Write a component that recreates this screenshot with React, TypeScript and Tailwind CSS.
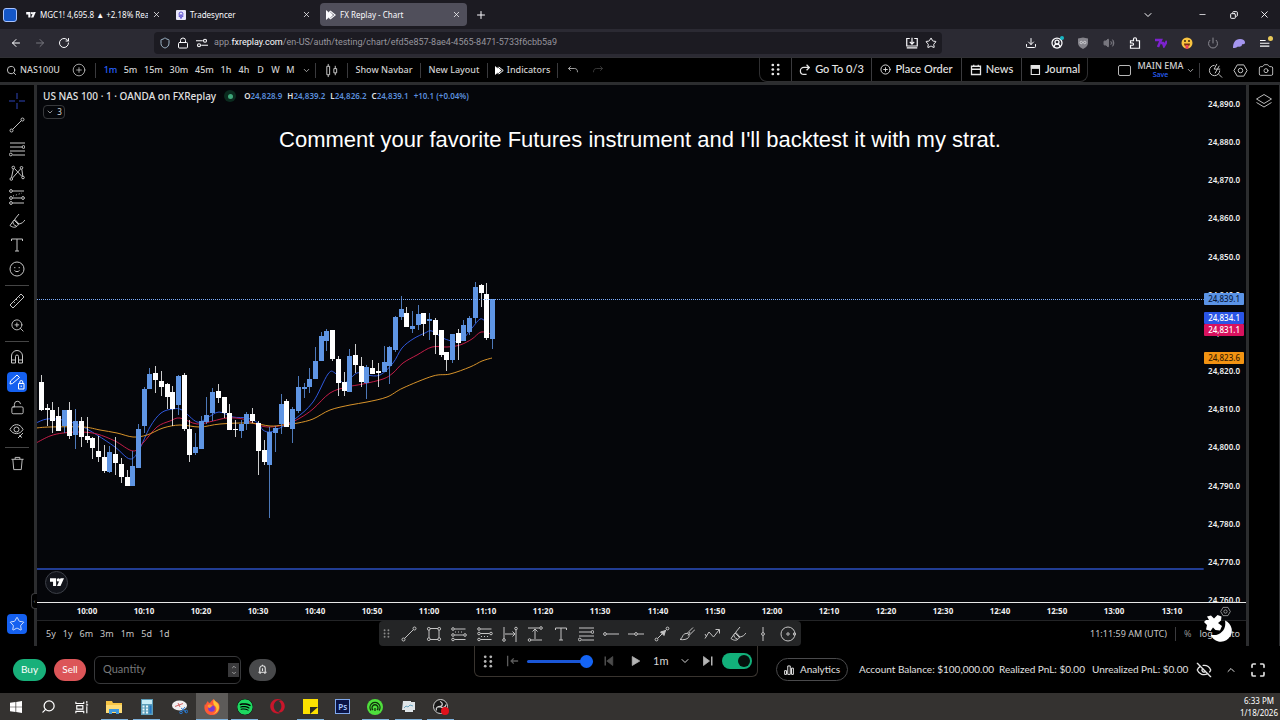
import React from 'react'
import {
  ArrowLeft,
  ArrowRight,
  Camera,
  ChevronDown,
  ChevronUp,
  CirclePlus,
  CircleUserRound,
  Copy,
  Download,
  EyeOff,
  Lock,
  LockOpen,
  Maximize,
  Minus,
  Plus,
  Power,
  RotateCw,
  Search,
  Shield,
  Star,
  Volume2,
  X,
  ZoomIn,
} from 'lucide-react'
import { FaOpera, FaSpotify } from 'react-icons/fa'

const UI_FONT = "font-['Noto_Sans','Open_Sans',sans-serif]"
const APP_FONT = "font-['Lato','Noto_Sans',sans-serif]"

// high, body top, body bottom, low; 'u' closes up (blue), 'd' closes down (white)
type Candle = ['u' | 'd', number, number, number, number]

const candles: Candle[] = [
  ['d', 290, 297, 325, 326], ['d', 319, 323, 325, 341], ['d', 317, 325, 336, 348], ['d', 322, 331, 346, 346],
  ['u', 325, 325, 341, 348], ['d', 317, 325, 351, 354], ['u', 324, 336, 350, 364], ['d', 332, 336, 352, 362],
  ['d', 332, 351, 355, 358], ['d', 352, 353, 363, 374], ['d', 351, 366, 372, 377], ['d', 360, 372, 386, 388],
  ['u', 361, 367, 387, 388], ['d', 352, 369, 378, 390], ['d', 373, 379, 392, 398], ['d', 385, 392, 401, 401],
  ['u', 366, 381, 401, 401], ['u', 339, 344, 383, 383], ['u', 302, 304, 341, 348], ['u', 283, 289, 304, 304],
  ['d', 281, 288, 295, 308], ['d', 286, 296, 302, 311], ['d', 298, 299, 312, 324], ['d', 301, 307, 324, 341],
  ['u', 290, 291, 320, 330], ['d', 288, 290, 344, 346], ['d', 335, 344, 370, 377], ['u', 348, 362, 368, 370],
  ['u', 331, 336, 364, 364], ['u', 312, 330, 337, 339], ['u', 303, 307, 328, 336], ['d', 299, 306, 313, 318],
  ['d', 312, 312, 328, 333], ['d', 319, 328, 345, 345], ['d', 335, 344, 345, 352], ['u', 335, 339, 346, 353],
  ['u', 327, 329, 339, 345], ['d', 323, 329, 336, 338], ['d', 336, 338, 366, 390], ['d', 355, 365, 377, 380],
  ['u', 342, 347, 380, 433], ['u', 341, 343, 348, 367], ['u', 309, 319, 339, 349], ['d', 314, 316, 342, 342],
  ['u', 322, 324, 344, 358], ['u', 291, 302, 326, 328], ['u', 298, 302, 304, 313], ['u', 283, 294, 302, 308],
  ['u', 262, 276, 294, 294], ['u', 247, 251, 276, 276], ['u', 244, 246, 256, 266], ['d', 245, 245, 274, 276],
  ['d', 271, 274, 298, 311], ['d', 287, 297, 306, 311], ['u', 264, 271, 307, 307], ['d', 259, 270, 280, 288],
  ['d', 272, 281, 297, 302], ['u', 280, 282, 298, 314], ['d', 275, 283, 289, 289], ['d', 278, 286, 288, 302],
  ['u', 261, 277, 287, 287], ['u', 261, 262, 281, 299], ['u', 231, 232, 265, 267], ['u', 211, 224, 232, 235],
  ['d', 222, 228, 242, 242], ['u', 226, 241, 244, 248], ['u', 220, 229, 240, 245], ['d', 228, 228, 239, 251],
  ['u', 228, 234, 236, 255], ['d', 233, 235, 250, 269], ['d', 245, 245, 270, 272], ['d', 267, 267, 275, 286],
  ['u', 249, 249, 275, 278], ['d', 244, 248, 258, 275], ['u', 235, 240, 256, 256], ['u', 231, 233, 247, 250],
  ['u', 197, 202, 233, 238], ['d', 199, 200, 208, 222], ['d', 198, 209, 253, 255], ['u', 214, 214, 254, 264],
]

const emaFast = [
  [-1, 338], [10, 334], [26, 335], [44, 341], [60, 350], [78, 362], [93, 374], [102, 365], [113, 342], [124, 328],
  [136, 324], [145, 325], [160, 337], [170, 333], [182, 327], [196, 332], [210, 333], [221, 338], [226, 345],
  [233, 347], [243, 343], [258, 334], [276, 317], [291, 289], [298, 288], [307, 298], [320, 288], [330, 290],
  [343, 290], [356, 278], [365, 263], [376, 254], [388, 248], [395, 246], [408, 254], [423, 256], [435, 243],
  [443, 234], [448, 236],
]

const emaMid = [
  [-1, 358], [13, 351], [26, 348], [44, 347], [60, 349], [78, 356], [96, 366], [106, 358], [120, 342], [133, 336],
  [143, 333], [160, 339], [176, 336], [190, 333], [206, 334], [221, 340], [233, 342], [250, 339], [263, 333],
  [276, 324], [293, 308], [310, 302], [326, 299], [346, 294], [356, 288], [366, 278], [380, 270], [395, 262],
  [410, 262], [423, 260], [435, 254], [444, 247], [454, 249],
]

const emaSlow = [
  [-1, 343], [13, 342], [46, 342], [63, 345], [80, 348], [96, 352], [110, 350], [126, 343], [143, 340], [163, 342],
  [183, 339], [213, 338], [233, 341], [246, 340], [261, 338], [276, 334], [293, 325], [313, 320], [330, 317],
  [350, 312], [366, 303], [396, 291], [413, 289], [433, 282], [445, 276], [455, 273],
]

const smooth = (pts: number[][]) =>
  pts.slice(1).reduce((d, p, i) => {
    const p0 = pts[Math.max(i - 1, 0)]
    const p1 = pts[i]
    const p3 = pts[Math.min(i + 2, pts.length - 1)]
    return `${d}C${p1[0] + (p[0] - p0[0]) / 6} ${p1[1] + (p[1] - p0[1]) / 6} ${p[0] - (p3[0] - p1[0]) / 6} ${
      p[1] - (p3[1] - p1[1]) / 6
    } ${p[0]} ${p[1]}`
  }, `M${pts[0][0]} ${pts[0][1]}`)

const prices = Array.from({ length: 14 }, (_, i) => `24,${890 - i * 10}.0`)

const times = Array.from({ length: 20 }, (_, i) => `${10 + Math.floor(i / 6)}:${i % 6}0`)

/* ---------- icons ---------- */

const Icon: React.FC<{ children: React.ReactNode; className?: string }> = ({ children, className = 'size-4' }) => (
  <svg viewBox="0 0 16 16" fill="none" stroke="currentColor" strokeWidth="1" className={className} aria-hidden="true">
    {children}
  </svg>
)

const TVLogo: React.FC<{ className?: string }> = ({ className }) => (
  <svg viewBox="0 0 16 10" fill="currentColor" className={className} aria-hidden="true">
    <path d="M0 0h7v9H3.5V4H0zM12 0h4l-4 9H8z" />
    <circle cx="9.6" cy="2" r="1.9" />
  </svg>
)

const ReplayLogo: React.FC<{ className?: string }> = ({ className }) => (
  <svg viewBox="0 0 12 12" className={className} aria-hidden="true">
    <path d="M0 0v12l7-6z" fill="currentColor" />
    <path d="M5 1.200 11 6l-6 4.800" fill="none" stroke="currentColor" strokeWidth="1.300" />
    <path d="M3.500 1 8.500 6l-5 5z" fill="currentColor" />
  </svg>
)

const Grip: React.FC<{ className?: string }> = ({ className }) => (
  <svg viewBox="0 0 10 14" fill="currentColor" className={className} aria-hidden="true">
    {[2, 7, 12].map(y => (
      <React.Fragment key={y}>
        <circle cx="2" cy={y} r="1.500" />
        <circle cx="8" cy={y} r="1.500" />
      </React.Fragment>
    ))}
  </svg>
)

const draw = {
  cross: <path d="M8 0v6M8 10v6M0 8h6M10 8h6" />,
  line: (
    <>
      <circle cx="2.500" cy="13.500" r="1.500" />
      <circle cx="13.500" cy="2.500" r="1.500" />
      <path d="m3.600 12.400 8.800-8.800" />
    </>
  ),
  fib: (
    <>
      <path d="M1 2h15M1 6h12M1 10h15M3.500 14H16" />
      <circle cx="14.500" cy="6" r="1.400" />
      <circle cx="1.800" cy="13.500" r="1.400" />
    </>
  ),
  pattern: (
    <>
      <path d="M2.500 12.500 4.300 4M5.500 3.500 13 11.500M12.800 4.200l1 7M11.500 4 3.500 13" />
      <circle cx="2.300" cy="14" r="1.300" />
      <circle cx="4.300" cy="2.500" r="1.300" />
      <circle cx="12.500" cy="2.800" r="1.300" />
      <circle cx="14" cy="12.500" r="1.300" />
    </>
  ),
  projection: (
    <>
      <path d="M3.500 2H15M3.500 9H12M3.500 14H15" />
      <path d="m4 7 9-3" strokeDasharray="1 2" />
      <circle cx="2" cy="2" r="1.400" />
      <circle cx="2" cy="9" r="1.400" />
      <circle cx="2" cy="14" r="1.400" />
      <circle cx="14" cy="9" r="1.400" />
    </>
  ),
  brush: <path d="M10 1 5.500 6.500M5.500 6 10 11c3-.500 4.500-2 6-4M5 7l-4 5.500C4 15 8 15 9.500 11M5 7l4.500 4.500M4 8.500c-.5 2 1 4 3.500 4.500" />,
  text: <path d="M2.500 4V2h11v2M8 2v12M6 14h4" />,
  smile: (
    <>
      <circle cx="8" cy="8" r="7" />
      <path d="M5.800 6v1.200M10.200 6v1.200M5.500 9.500c1.300 1.500 3.700 1.500 5 0" />
    </>
  ),
  ruler: <path d="M1 12 12 1l3 3L4 15zM9.500 3.500l1.300 1.300M7 6l1.300 1.300M4.500 8.500l1.300 1.300" />,
  magnet: <path d="M2.500 14V7a5.500 5.500 0 0 1 11 0v7h-4V7.500a1.500 1.500 0 0 0-3 0V14zM2.500 11h4M9.500 11h4" />,
  penLock: (
    <>
      <path d="m1 10 .500-3L8 1l2.500 2.500-7 6z" />
      <path d="M9.500 9.500h5.500V15H9.500zM10.800 9.500V8a1.500 1.500 0 0 1 3 0v1.500M12.200 11.500v1.500" />
    </>
  ),
  eye: (
    <>
      <path d="M1 6.500c3-6.500 10-6.500 13 0-3 5.500-10 5.500-13 0z" />
      <circle cx="7.500" cy="6.500" r="2.500" />
      <path d="m9 15 5-5M10 12.500l3 2" />
    </>
  ),
  trash: <path d="M1.500 3.500h13M5.500 3.500V1.500h5v2M3 3.500 4 14.500h8l1-11" />,
  layers: <path d="M8 1.500 15.500 6 8 10.500.500 6zM.500 9.500 8 14l7.500-4.500" />,
  rect: (
    <>
      <path d="M3 4v8M13 4v8M4 2.500h8M4 13.500h8" />
      <circle cx="2.800" cy="2.800" r="1.400" />
      <circle cx="13.200" cy="2.800" r="1.400" />
      <circle cx="2.800" cy="13.200" r="1.400" />
      <circle cx="13.200" cy="13.200" r="1.400" />
    </>
  ),
  longPos: (
    <>
      <path d="M3.500 3h11M3.500 9H12.500M3.500 13.500h11" />
      <path d="M4 6h9" strokeDasharray="1 2" />
      <circle cx="2" cy="3" r="1.300" />
      <circle cx="14" cy="9" r="1.300" />
      <circle cx="2" cy="9" r="1.300" />
      <circle cx="2" cy="13.500" r="1.300" />
    </>
  ),
  shortPos: (
    <>
      <path d="M3.500 3h11M3.500 7.500H12.500M3.500 13.500h11" />
      <path d="M4 10.500h9" strokeDasharray="1 2" />
      <circle cx="2" cy="3" r="1.300" />
      <circle cx="2" cy="7.500" r="1.300" />
      <circle cx="14" cy="7.500" r="1.300" />
      <circle cx="2" cy="13.500" r="1.300" />
    </>
  ),
  dateRange: (
    <>
      <path d="M2 1v12M14 4v12M3 8h10M10.500 5.500 13 8l-2.500 2.500" />
      <circle cx="2" cy="14" r="1.300" />
      <circle cx="14" cy="2.500" r="1.300" />
    </>
  ),
  priceRange: (
    <>
      <path d="M1 2h11.500M4 14h11M8 13V3M5.500 5.500 8 3l2.500 2.500" />
      <circle cx="14" cy="2" r="1.300" />
      <circle cx="2.500" cy="14" r="1.300" />
    </>
  ),
  ray: (
    <>
      <circle cx="2" cy="8" r="1.400" />
      <path d="M3.500 8H16" />
    </>
  ),
  hline: (
    <>
      <circle cx="8" cy="8" r="1.400" />
      <path d="M0 8h6.500M9.500 8H16" />
    </>
  ),
  arrow: (
    <>
      <circle cx="2.500" cy="13.500" r="1.400" />
      <circle cx="13.500" cy="2.500" r="1.400" />
      <path d="M3.500 12.500 12.500 3.500" />
      <path d="m11.500 4.500-1.500 5L6.500 6z" fill="currentColor" />
    </>
  ),
  paint: <path d="M7 7.500c3-.500 4 2 2.500 4-1.500 2-5 2.500-8.500 2 3-1.500 2-5.500 6-6zM8.500 7 14 1.500M10.500 9l5.500-5.500M9 9.500 11 6" />,
  path: <path d="M1 12.500 5 6l4.500 5L15 4M11.500 3.500H15.500v4M2.500 10.500 1 8" />,
  vline: (
    <>
      <circle cx="8" cy="8" r="1.400" />
      <path d="M8 1v5.500M8 9.500V15" />
    </>
  ),
  circle: (
    <>
      <circle cx="8" cy="8" r="7" />
      <circle cx="8" cy="8" r="1.200" />
      <circle cx="14.500" cy="8" r="1.200" />
    </>
  ),
  candles: <path d="M3 3.500h3v9H3zM4.500 1v2.500M4.500 12.500V15M10.500 6h3v4.500h-3zM12 3v3M12 10.500V13" />,
  hex: (
    <>
      <path d="M4.500 2h7L15 8l-3.500 6h-7L1 8z" />
      <circle cx="8" cy="8" r="2.400" />
    </>
  ),
  quick: <path d="M7 2.500A5.500 5.500 0 1 0 12.500 8M11.500 12l3.500 3.500M9.500 1 6.500 6.500H10L7.500 11M12 3l-2 3.500h3" />,
}

/* ---------- browser chrome ---------- */

const TabBar: React.FC = () => (
  <div className="flex h-[29px] shrink-0 items-center bg-[#1c1b22] text-[8px] text-[#fbfbfe]">
    <button aria-label="Firefox View" className="mx-[3px] size-[14px] rounded-[3px] border border-[#a9c4ff] bg-[#1356c8]" />
    <div role="tablist" className="flex items-center gap-[3px]">
      <div className="flex h-[23px] w-[147px] items-center gap-1 px-[6px]">
        <TVLogo className="h-[6px] w-[10px] shrink-0" />
        <button role="tab" className="min-w-0 flex-1 overflow-hidden whitespace-nowrap text-left">MGC1! 4,695.8 ▲ +2.18% RealE</button>
        <button aria-label="Close tab"><X className="size-[9px]" /></button>
      </div>
      <div className="flex h-[23px] w-[147px] items-center gap-1 px-[6px]">
        <span className="flex size-[10px] shrink-0 items-center justify-center rounded-[1px] bg-[#e9e7fb]">
          <svg viewBox="0 0 8 8" className="size-2" fill="none" stroke="#5a4fd0" aria-hidden="true">
            <circle cx="4" cy="3" r="2" />
            <path d="M4 3v5M1.500 5 4 6.500 6.500 5" />
          </svg>
        </span>
        <button role="tab" className="flex-1 text-left">Tradesyncer</button>
        <button aria-label="Close tab"><X className="size-[9px]" /></button>
      </div>
      <div className="flex h-[23px] w-[147px] items-center gap-1 rounded bg-[#504f5b] px-[6px]">
        <ReplayLogo className="size-[10px] shrink-0" />
        <button role="tab" aria-selected="true" className="flex-1 text-left">FX Replay - Chart</button>
        <button aria-label="Close tab"><X className="size-[9px]" /></button>
      </div>
    </div>
    <button aria-label="New tab" className="ml-2"><Plus className="size-3" /></button>
    <div className="ml-auto flex items-center">
      <button aria-label="List all tabs" className="mr-[33px]"><ChevronDown className="size-3" /></button>
      <button aria-label="Minimize" className="flex w-[31px] justify-center"><Minus className="size-[9px]" /></button>
      <button aria-label="Restore" className="flex w-[31px] justify-center"><Copy className="size-2 -scale-x-100" strokeWidth={3} /></button>
      <button aria-label="Close" className="flex w-[31px] justify-center"><X className="size-[11px]" /></button>
    </div>
  </div>
)

const NavBar: React.FC = () => (
  <div className="flex h-7 shrink-0 items-center bg-[#2b2a33] text-[#fbfbfe]">
    <div className="flex w-[154px] shrink-0 items-center gap-3 pl-[10px]">
      <button aria-label="Back"><ArrowLeft className="size-3" /></button>
      <button aria-label="Forward" className="text-[#77767e]"><ArrowRight className="size-3" /></button>
      <button aria-label="Reload"><RotateCw className="size-3" /></button>
    </div>
    <div className="flex h-[22px] w-[788px] items-center rounded bg-[#1c1b22] px-[5px] text-[9px]">
      <Shield className="size-3 text-[#9fb6c8]" />
      <Lock className="ml-[6px] size-3" />
      <Icon className="ml-[7px] mr-[6px] size-3">
        <path d="M0 5h9M7 11h9" strokeWidth="1.500" />
        <circle cx="12" cy="5" r="2" strokeWidth="1.500" />
        <circle cx="4" cy="11" r="2" strokeWidth="1.500" />
      </Icon>
      <span className="flex-1 whitespace-nowrap font-['Roboto','Noto_Sans',sans-serif] text-[#96959d]">
        app.<span className="text-[#fbfbfe]">fxreplay.com</span>/en-US/auth/testing/chart/efd5e857-8ae4-4565-8471-5733f6cbb5a9
      </span>
      <button aria-label="Install" className="mr-[7px]">
        <Icon className="size-3">
          <path d="M5 2H1v10h14V2h-4M8 1v8M5 6.500l3 3 3-3M1 14.500h14" strokeWidth="1.600" />
        </Icon>
      </button>
      <button aria-label="Bookmark"><Star className="size-3" /></button>
    </div>
    <div className="ml-auto flex items-center">
      <button aria-label="Downloads" className="flex w-[26px] justify-center"><Download className="size-3" /></button>
      <button aria-label="Account" className="relative flex w-[26px] justify-center">
        <CircleUserRound className="size-3" strokeWidth={2.5} />
        <span className="absolute -top-[1px] right-[6px] size-1 rounded-full bg-[#19b8c4]" />
      </button>
      <button aria-label="Blocker" className="flex w-[26px] justify-center">
        <svg viewBox="0 0 12 12" className="size-3" aria-hidden="true">
          <path d="M1 1.500 6 .500l5 1V6c0 3-3 5-5 6-2-1-5-3-5-6z" fill="#85848c" />
          <circle cx="4.300" cy="5.500" r="1.200" fill="none" stroke="#dcdce0" strokeWidth=".8" />
          <circle cx="7.700" cy="5.500" r="1.200" fill="none" stroke="#dcdce0" strokeWidth=".8" />
        </svg>
      </button>
      <button aria-label="Sound" className="flex w-[26px] justify-center"><Volume2 className="size-3 fill-[#77767e] text-[#77767e]" /></button>
      <button aria-label="Extensions" className="flex w-[26px] justify-center">
        <Icon className="size-3">
          <path d="M2 15V11h2.500a1.500 1.500 0 0 0 0-3H2V5h4V3a2 2 0 0 1 4 0v2h4v10z" strokeWidth="1.600" />
        </Icon>
      </button>
      <button aria-label="7TV" className="flex w-[26px] justify-center">
        <svg viewBox="0 0 12 10" className="h-[10px] w-3" fill="none" stroke="#7c22ce" strokeWidth="2.500" aria-hidden="true">
          <path d="M0 2h6L3 9M6 5h2l1 3 3-5" />
        </svg>
      </button>
      <button aria-label="Emotes" className="flex w-[26px] justify-center">
        <svg viewBox="0 0 12 12" className="size-3" aria-hidden="true">
          <circle cx="6" cy="6" r="5.500" fill="#f9c440" />
          <path d="M3 6.500h6a3 3 0 0 1-6 0z" fill="#7a3510" />
          <path d="M4.500 8h3v2.500a1.500 1.500 0 0 1-3 0z" fill="#e8455a" />
          <circle cx="4" cy="4" r="1" fill="#3a2410" />
          <circle cx="8" cy="4" r="1" fill="#3a2410" />
        </svg>
      </button>
      <button aria-label="Turn off" className="flex w-[26px] justify-center text-[#8d8c94]"><Power className="size-3" /></button>
      <button aria-label="Theme" className="flex w-[26px] justify-center">
        <svg viewBox="0 0 12 12" className="size-3" fill="#a596ef" aria-hidden="true">
          <path d="M0 11c0-5 2-9 7-9 3 0 5 1.500 5 3.500 0 2-2 1.500-3 2 0 2-2.500 2.500-4 2-1.500 1-3 1.500-5 1.500z" />
        </svg>
      </button>
      <button aria-label="Menu" className="relative mr-[2px] flex w-[26px] justify-center">
        <Icon className="size-[10px]">
          <path d="M0 4h9M0 8.500h15M0 13h15" strokeWidth="1.700" />
        </Icon>
        <span className="absolute -top-[2px] right-[5px] size-[5px] rounded-full bg-[#e8c95a]" />
      </button>
    </div>
  </div>
)

/* ---------- chart header ---------- */

const Divider: React.FC<{ className?: string }> = ({ className = 'h-[15px]' }) => (
  <span className={`w-px shrink-0 bg-[#3a3a3d] ${className}`} />
)

const intervals = [
  { label: '1m', width: 'w-[19px]' },
  { label: '5m', width: 'w-[21px]' },
  { label: '15m', width: 'w-[25px]' },
  { label: '30m', width: 'w-[26px]' },
  { label: '45m', width: 'w-[25px]' },
  { label: '1h', width: 'w-[18px]' },
  { label: '4h', width: 'w-[18px]' },
  { label: 'D', width: 'w-[15px]' },
  { label: 'W', width: 'w-[15px]' },
  { label: 'M', width: 'w-[15px]' },
]

const ReplayMenu: React.FC = () => (
  <div className={`flex h-6 shrink-0 self-start rounded-b-lg border border-t-0 border-[#2f2f31] text-[11px] text-[#e6e6e6] ${APP_FONT}`}>
    <button aria-label="Move" className="flex w-[31px] items-center justify-center">
      <Grip className="h-[13px] w-[9px]" />
    </button>
    <Divider className="h-full" />
    <button className="flex w-[79px] items-center justify-center gap-[5px]">
      <Icon className="size-[11px]">
        <path d="M15 5H7a5 5 0 1 0 0 10h4M11 1l4 4-4 4" strokeWidth="1.800" />
      </Icon>
      Go To 0/3
    </button>
    <Divider className="h-full" />
    <button className="flex w-[89px] items-center justify-center gap-1">
      <CirclePlus className="size-[11px]" />
      Place Order
    </button>
    <Divider className="h-full" />
    <button className="flex w-[59px] items-center justify-center gap-1">
      <Icon className="size-3"><path d="M2 3h12v11H2zM2 7h12M5 1v3M11 1v3" strokeWidth="1.700" /></Icon>
      News
    </button>
    <Divider className="h-full" />
    <button className="flex w-[65px] items-center justify-center gap-1">
      <Icon className="size-3">
        <path d="M3 2h11v12H3z" strokeWidth="1.500" />
        <path d="M3 2h11v4H3z" fill="currentColor" />
      </Icon>
      Journal
    </button>
  </div>
)

const ChartHeader: React.FC = () => (
  <header className="flex h-7 shrink-0 items-center border-t border-b-[3px] border-t-[#303034] border-b-[#2c2d2f] bg-black text-[9px] font-medium text-[#d1d1d1]">
    <button className="ml-[6px] flex w-[54px] items-center gap-[3px] overflow-hidden whitespace-nowrap">
      <Search className="size-[11px] shrink-0" />
      NAS100USD
    </button>
    <button aria-label="Compare" className="ml-3 mr-[9px]"><CirclePlus className="size-[14px]" strokeWidth={1.3} /></button>
    <Divider className="mr-[5px] h-[15px]" />
    {intervals.map(({ label, width }, i) => (
      <button key={label} className={`${width} text-center ${i === 0 ? 'text-[#2962ff]' : ''}`}>
        {label}
      </button>
    ))}
    <button aria-label="More intervals" className="mx-1"><ChevronDown className="size-[9px]" /></button>
    <Divider />
    <button aria-label="Chart type" className="mx-2"><Icon className="size-[15px]">{draw.candles}</Icon></button>
    <Divider />
    <button className="w-[72px] whitespace-nowrap">Show Navbar</button>
    <Divider />
    <button className="w-[66px] whitespace-nowrap">New Layout</button>
    <Divider />
    <button className="flex w-[69px] items-center justify-center gap-[3px]">
      <ReplayLogo className="size-[9px] text-white" />
      Indicators
    </button>
    <Divider />
    <button aria-label="Undo" className="ml-[9px]">
      <Icon className="size-3"><path d="M5 3 2 6l3 3M2 6h8c3 0 4 2 4 5" /></Icon>
    </button>
    <button aria-label="Redo" className="ml-[13px] text-[#4a4a4a]">
      <Icon className="size-3"><path d="m11 3 3 3-3 3M14 6H6c-3 0-4 2-4 5" /></Icon>
    </button>
    <div className="flex-1" />
    <ReplayMenu />
    <div className="ml-[30px] mr-[6px] flex items-center">
      <button aria-label="Layout setup" className="h-[11px] w-[13px] rounded-[2px] border border-[#b8b8b8]" />
      <button className="ml-2 flex w-[43px] flex-col items-center whitespace-nowrap text-[9px] leading-[9px]">
        MAIN EMA
        <span className="text-[7px] text-[#2962ff]">Save</span>
      </button>
      <button aria-label="Layouts" className="mx-1"><ChevronDown className="size-[9px]" /></button>
      <Divider />
      <button aria-label="Quick search" className="ml-2"><Icon className="size-[15px]">{draw.quick}</Icon></button>
      <button aria-label="Settings" className="ml-[10px]"><Icon className="size-[15px]">{draw.hex}</Icon></button>
      <button aria-label="Snapshot" className="ml-[10px]"><Camera className="size-4" strokeWidth={1.3} /></button>
    </div>
  </header>
)

/* ---------- drawing tools ---------- */

const Tool: React.FC<{ label: string; active?: boolean; children: React.ReactNode }> = ({ label, active, children }) => (
  <button aria-label={label} className="flex h-6 w-full items-center justify-center">
    <span className={`flex size-5 items-center justify-center rounded-sm ${active ? 'bg-[#1460f0] text-white' : ''}`}>{children}</span>
  </button>
)

const ToolSeparator = () => <div className="flex h-2 items-center px-[5px]"><span className="h-px w-full bg-[#454545]" /></div>

const LeftToolbar: React.FC = () => (
  <aside className="flex w-[37px] shrink-0 flex-col border-r-[3px] border-[#2c2d2f] bg-black pb-[10px] pt-1 text-[#c6c6c6]">
    <Tool label="Cross"><Icon className="size-4 text-[#2f45b8]">{draw.cross}</Icon></Tool>
    <Tool label="Trend line"><Icon>{draw.line}</Icon></Tool>
    <Tool label="Fib retracement"><Icon>{draw.fib}</Icon></Tool>
    <Tool label="Patterns"><Icon>{draw.pattern}</Icon></Tool>
    <Tool label="Projection"><Icon>{draw.projection}</Icon></Tool>
    <Tool label="Brush"><Icon>{draw.brush}</Icon></Tool>
    <Tool label="Text"><Icon>{draw.text}</Icon></Tool>
    <Tool label="Icons"><Icon>{draw.smile}</Icon></Tool>
    <ToolSeparator />
    <Tool label="Measure"><Icon>{draw.ruler}</Icon></Tool>
    <Tool label="Zoom in"><ZoomIn className="size-[15px]" strokeWidth={1.5} /></Tool>
    <ToolSeparator />
    <div className="flex flex-col gap-px">
      <Tool label="Magnet"><Icon>{draw.magnet}</Icon></Tool>
      <Tool label="Stay in drawing mode" active><Icon>{draw.penLock}</Icon></Tool>
      <Tool label="Lock all drawings"><LockOpen className="size-[15px]" strokeWidth={1.5} /></Tool>
    </div>
    <Tool label="Hide all drawings"><Icon>{draw.eye}</Icon></Tool>
    <ToolSeparator />
    <Tool label="Remove objects"><Icon className="size-[15px]">{draw.trash}</Icon></Tool>
    <div className="mt-auto">
      <Tool label="Favorites" active><Star className="size-4" strokeWidth={1.2} /></Tool>
    </div>
  </aside>
)

const favorites = [
  { label: 'Trend line', icon: draw.line },
  { label: 'Rectangle', icon: draw.rect },
  { label: 'Long position', icon: draw.longPos },
  { label: 'Short position', icon: draw.shortPos },
  { label: 'Date range', icon: draw.dateRange },
  { label: 'Price range', icon: draw.priceRange },
  { label: 'Text', icon: draw.text },
  { label: 'Fib retracement', icon: draw.fib },
  { label: 'Horizontal ray', icon: draw.ray },
  { label: 'Horizontal line', icon: draw.hline },
  { label: 'Arrow', icon: draw.arrow },
  { label: 'Brush', icon: draw.paint },
  { label: 'Path', icon: draw.path },
  { label: 'Highlighter', icon: draw.brush },
  { label: 'Vertical line', icon: draw.vline },
  { label: 'Circle', icon: draw.circle },
]

const FavoritesToolbar: React.FC = () => (
  <div className="absolute bottom-0 left-[342px] flex h-[25px] w-[422px] items-center rounded bg-[#242526] pl-1 text-[#c4c4c4]">
    <Grip className="h-[9px] w-[7px] text-[#8a8a8a]" />
    <div className="ml-[6px] flex flex-1 items-center justify-around">
      {favorites.map(({ label, icon }) => (
        <button key={label} aria-label={label}><Icon>{icon}</Icon></button>
      ))}
    </div>
  </div>
)

/* ---------- chart ---------- */

const priceTags = [
  { value: '24,839.1', style: 'top-[208px] bg-[#5b93e6] text-[#0a1a3c]' },
  { value: '24,834.1', style: 'top-[227px] bg-[#2a55e6] text-white' },
  { value: '24,831.1', style: 'top-[239px] bg-[#d8125e] text-white' },
  { value: '24,823.6', style: 'top-[267px] bg-[#f29312] text-[#3a1d00]' },
]

const Plot: React.FC = () => (
  <div className="relative min-h-0 flex-1">
    <svg className="block h-full w-full" aria-hidden="true">
      <g fill="none" strokeWidth="1">
        <path d={smooth(emaFast)} stroke="#2f58dc" />
        <path d={smooth(emaMid)} stroke="#c41d48" />
        <path d={smooth(emaSlow)} stroke="#d8932a" />
      </g>
      {candles.map(([dir, high, top, bottom, low], i) => {
        const x = Math.floor(4.4 + i * 5.71)
        const color = dir === 'u' ? '#5f95e4' : '#ffffff'
        return (
          <g key={i} fill={color}>
            <rect x={x} y={high} width="1" height={low - high} opacity="0.8" />
            <rect x={x - 2} y={top} width="5" height={bottom - top} />
          </g>
        )
      })}
      <line x1="0" x2="96.5%" y1="214.5" y2="214.5" stroke="#7fb0ff" strokeDasharray="1 1" />
      <line x1="0" x2="96.5%" y1="484" y2="484" stroke="#213c93" strokeWidth="2" />
      <g className="text-[8px] font-semibold" fill="#f0f0f0" textAnchor="end">
        {prices.map((p, i) => (
          <text key={p} x="100%" dx="-6" y={Math.round(22 + i * 38.15)}>{p}</text>
        ))}
      </g>
    </svg>
    {priceTags.map(({ value, style }) => (
      <span key={value} className={`absolute right-[2px] flex h-3 w-10 items-center justify-end rounded-[1px] pr-1 text-[8px] font-medium ${style}`}>
        {value}
      </span>
    ))}
    <div className="absolute left-[6px] top-1 flex items-center whitespace-nowrap text-[10px] font-medium leading-[14px] text-[#e2e2e2]">
      <h1>US NAS 100 · 1 · OANDA on FXReplay</h1>
      <span className="mx-2 flex size-3 items-center justify-center rounded-full bg-[#0b2b1f]">
        <span className="size-[5px] rounded-full bg-[#3fa67a]" />
      </span>
      <p className="flex gap-[5px] text-[8px] font-semibold text-[#5b8fdd]">
        <span><span className="text-[#e2e2e2]">O</span>24,828.9</span>
        <span><span className="text-[#e2e2e2]">H</span>24,839.2</span>
        <span><span className="text-[#e2e2e2]">L</span>24,826.2</span>
        <span><span className="text-[#e2e2e2]">C</span>24,839.1</span>
        <span>+10.1 (+0.04%)</span>
      </p>
    </div>
    <button aria-label="Toggle indicators" className="absolute left-[6px] top-5 flex h-[14px] w-[22px] items-center justify-center gap-[3px] rounded-sm border border-[#38393c] text-[8px] text-[#d8d8d8]">
      <ChevronDown className="size-2" />3
    </button>
    <p className="absolute inset-x-0 top-[42px] pr-[3px] text-center font-['Liberation_Sans',Arial,sans-serif] text-[22px] leading-[26px] text-white">
      Comment your favorite Futures instrument and I'll backtest it with my strat.
    </p>
    <a href="#tradingview" aria-label="TradingView" className="absolute bottom-2 left-2 flex size-[23px] items-center justify-center rounded-full border border-[#3c3f47] bg-[#11131a] text-white">
      <TVLogo className="h-[9px] w-[14px]" />
    </a>
  </div>
)

const TimeAxis: React.FC = () => (
  <div className="relative h-[19px] shrink-0 border-b border-t border-b-[#232426] border-t-[#e8e8e8]">
    <svg className="block h-full w-full" aria-hidden="true">
      <g className="text-[8px] font-bold" fill="#f0f0f0" textAnchor="middle">
        {times.map((t, i) => (
          <text key={t} x={Math.floor(50 + i * 57.11)} y="11">{t}</text>
        ))}
      </g>
    </svg>
    <button aria-label="Axis settings" className="absolute right-[15px] top-[3px] text-[#c0c0c0]">
      <Icon className="size-[11px]">{draw.hex}</Icon>
    </button>
  </div>
)

const ranges = ['5y', '1y', '6m', '3m', '1m', '5d', '1d']

const RangeBar: React.FC = () => (
  <div className="relative flex h-[25px] shrink-0 items-center bg-black pl-[9px] pr-[6px] text-[9px] text-[#c8c8c8]">
    <div className="flex gap-[7px]">
      {ranges.map(r => <button key={r}>{r}</button>)}
    </div>
    <div className="ml-auto flex items-center gap-2 whitespace-nowrap">
      <span>11:11:59 AM (UTC)</span>
      <Divider className="h-[14px]" />
      <button className="text-[#8e8e8e]">%</button>
      <button>log</button>
      <button>auto</button>
    </div>
    <FavoritesToolbar />
    <svg viewBox="0 0 28 28" className="absolute right-[14px] top-[-6px] size-7" fill="#fff" aria-hidden="true">
      <path d="M3 1.500 7 .500l3 3 3.500-3.500 4 1.500-.500 4L14 8l4 3-2 4.500-4.500-.500L9 12.500 6.500 16 2 14.500 3 10 0 7l2-2 3 0z" />
      <path d="M21 5.500a11 11 0 1 1-14.500 14C15 22 23 15 21 5.500z" />
    </svg>
  </div>
)

/* ---------- bottom bars ---------- */

const ReplayControls: React.FC = () => (
  <div className="flex h-[31px] w-[284px] items-center self-start rounded-b-md border border-t-0 border-[#39342f] px-2 text-[#b4b4b4]">
    <Grip className="h-[13px] w-[10px]" />
    <button aria-label="Jump to start" className="ml-3 text-[#5c5c5c]">
      <Icon className="size-[14px]"><path d="M3 2v12M15 8H7M10 5 7 8l3 3" strokeWidth="1.500" /></Icon>
    </button>
    <input
      type="range"
      aria-label="Replay speed"
      defaultValue={100}
      className="ml-2 h-[3px] w-[66px] appearance-none rounded-full bg-[#1a56d6] [&::-webkit-slider-thumb]:size-[13px] [&::-webkit-slider-thumb]:appearance-none [&::-webkit-slider-thumb]:rounded-full [&::-webkit-slider-thumb]:bg-[#1464f4]"
    />
    <button aria-label="Step back" className="ml-[10px] text-[#4c4c4c]">
      <Icon className="size-3"><path d="M3 2v12" strokeWidth="2" /><path d="M13 2v12L5 8z" fill="currentColor" /></Icon>
    </button>
    <button aria-label="Play" className="ml-[15px]">
      <Icon className="size-3"><path d="M3 2v12l10-6z" fill="currentColor" /></Icon>
    </button>
    <button className={`ml-[11px] flex items-center gap-[11px] text-[11px] text-[#d8d8d8] ${APP_FONT}`}>
      1m
      <ChevronDown className="size-3" />
    </button>
    <button aria-label="Step forward" className="ml-[11px]">
      <Icon className="size-3"><path d="M13 2v12" strokeWidth="2" /><path d="M2 2v12l8-6z" fill="currentColor" /></Icon>
    </button>
    <input
      type="checkbox"
      aria-label="Replay mode"
      defaultChecked
      className="relative ml-auto mr-[-3px] h-4 w-[30px] appearance-none rounded-full bg-[#12b07a] before:absolute before:right-[2px] before:top-[2px] before:size-3 before:rounded-full before:bg-[#05100c]"
    />
  </div>
)

const TradeBar: React.FC = () => (
  <footer className={`flex h-[47px] shrink-0 items-center bg-black pl-[13px] pr-[14px] text-[10px] text-[#e2e2e2] ${APP_FONT}`}>
    <div className="flex items-center gap-2">
      <button className="h-[22px] w-[33px] rounded-full bg-[#18b07a] text-white">Buy</button>
      <button className="h-[22px] w-8 rounded-full bg-[#dc5558] text-white">Sell</button>
      <label className="flex h-7 w-[147px] items-center rounded-md border border-[#37383a] pl-2 pr-px">
        <span className="sr-only">Quantity</span>
        <input placeholder="Quantity" className="w-full min-w-0 flex-1 bg-transparent text-[11px] outline-none placeholder:text-[#77787a]" />
        <span className="flex h-[14px] w-[11px] flex-col items-center justify-center bg-[#3a3a3c] text-[#bdbdbd]">
          <ChevronUp className="size-[6px]" strokeWidth={3} />
          <ChevronDown className="size-[6px]" strokeWidth={3} />
        </span>
      </label>
      <button aria-label="Alerts" className="flex h-[22px] w-[27px] items-center justify-center rounded-full bg-[#48494b]">
        <Icon className="size-[11px]">
          <path d="M4 12V6.500a4 4 0 0 1 8 0V12M2 12h12M4.500 12v2.500M11.500 12v2.500M8 6v4M8 2.500V1" strokeWidth="1.600" />
        </Icon>
      </button>
    </div>
    <div className="ml-auto flex items-center self-stretch">
      <ReplayControls />
      <button className="ml-[18px] flex h-[23px] w-[72px] items-center justify-center gap-[6px] rounded-full border border-[#4a4a4c]">
        <Icon className="size-[10px]"><path d="M1 9h3v6H1zM6 1.500h4V15H6zM12 5h3v10h-3z" strokeWidth="1.600" /></Icon>
        Analytics
      </button>
      <p className="ml-[11px] w-[134px] whitespace-nowrap">Account Balance: $100,000.00</p>
      <p className="ml-[6px] w-[86px] whitespace-nowrap">Realized PnL: $0.00</p>
      <p className="ml-[7px] w-[96px] whitespace-nowrap">Unrealized PnL: $0.00</p>
      <button aria-label="Hide balances" className="ml-[8px]"><EyeOff className="size-4" /></button>
      <button aria-label="Expand" className="ml-[13px]"><ChevronUp className="size-3" /></button>
      <button aria-label="Fullscreen" className="ml-[13px]"><Maximize className="size-4" strokeWidth={2.5} /></button>
    </div>
  </footer>
)

const apps = [
  {
    name: 'Start',
    icon: <svg viewBox="0 0 12 12" fill="#fff" className="size-3"><path d="M0 1.700 5.500 1v4.700H0zM6.200.9 12 0v5.700H6.200zM0 6.300h5.500V11L0 10.300zM6.200 6.300H12V12l-5.800-.900z" /></svg>,
  },
  { name: 'Search', icon: <Search className="size-[15px] -scale-x-100 text-white" /> },
  {
    name: 'Task View',
    icon: <Icon className="size-[14px] text-white"><path d="M1 2v2h9V2M2 6.500h7v4H2zM1 15v-2h9v2M13.500 1v3M13.500 7v8M12.500 5.500h2.500" strokeWidth="1.300" /></Icon>,
  },
  {
    name: 'File Explorer',
    running: true,
    icon: (
      <svg viewBox="0 0 16 14" className="h-[14px] w-4">
        <path d="M0 1h6l1 2h9v10H0z" fill="#f6c445" />
        <path d="M0 5h16v8H0z" fill="#fddc76" />
        <path d="M3 14V9h10v5h-3v-2H6v2z" fill="#3f98dc" />
      </svg>
    ),
  },
  {
    name: 'Calculator',
    running: true,
    icon: (
      <svg viewBox="0 0 12 16" className="h-4 w-3">
        <rect width="12" height="16" fill="#5b9cb8" />
        <path d="M1 1h10v4H1z" fill="#c8ecf6" />
        <path d="M1.500 6.500h2v2h-2zM5 6.500h2v2H5zM1.500 9.500h2v2h-2zM5 9.500h2v2H5zM1.500 12.500h2v2h-2zM5 12.500h2v2H5z" fill="#e9f6fa" />
        <path d="M8.500 6.500h2v8h-2z" fill="#2276c9" />
      </svg>
    ),
  },
  {
    name: 'Snipping Tool',
    icon: (
      <svg viewBox="0 0 16 14" className="h-[14px] w-4">
        <ellipse cx="7.500" cy="5.500" rx="7.500" ry="5" fill="#f1eff0" />
        <path d="M3 6.500 11 3.500M6 3l2 4" stroke="#cc4444" strokeWidth=".8" />
        <path d="m9 8 5 4M13 7l-4 5" stroke="#2a7dd6" strokeWidth="1" />
        <circle cx="9" cy="12.500" r="1.300" fill="none" stroke="#2a7dd6" />
        <circle cx="14.300" cy="11.500" r="1.300" fill="none" stroke="#2a7dd6" />
      </svg>
    ),
  },
  {
    name: 'Firefox',
    active: true,
    icon: (
      <svg viewBox="0 0 16 16" className="size-4">
        <path d="M15 5c2 5-1 11-7 11S-1 10 1 5l1 1c0-2 1-3 2-4 0 1 1 2 2 2 1-2 2-3 4-4 0 2 3 2 5 5z" fill="#ff5a36" />
        <path d="M10 0c0 3 5 3 5 8 0 4-3 7-7 7 5-1 6-6 2-9-1-2-1-4 0-6z" fill="#ffc233" />
        <circle cx="7.500" cy="9.500" r="3.300" fill="#7a3bd0" />
        <path d="M4 6c2-1 4 0 5 1-2 0-2 2-4 2-1-1-2-2-1-3z" fill="#ff9a2e" />
      </svg>
    ),
  },
  { name: 'Spotify', running: true, icon: <FaSpotify className="size-4 rounded-full bg-black text-[#1ed760]" /> },
  { name: 'Opera', icon: <FaOpera className="size-[15px] text-[#c9162b]" /> },
  {
    name: 'Sticky Notes',
    running: true,
    icon: <svg viewBox="0 0 15 15" className="size-[15px]"><path d="M0 0h15v15H0z" fill="#fde100" /><path d="M7 8h8l-8 7z" fill="#2c2a20" /></svg>,
  },
  {
    name: 'Photoshop',
    icon: <span className="flex size-[15px] items-center justify-center border border-[#7fa8ec] bg-[#0a1446] text-[8px] font-semibold text-[#a9c8ff]">Ps</span>,
  },
  {
    name: 'Audio',
    running: true,
    icon: (
      <svg viewBox="0 0 16 16" className="size-4" fill="none" stroke="#10300c" strokeWidth="1.300">
        <circle cx="8" cy="8" r="8" fill="#4fe03c" stroke="none" />
        <path d="M4 11.500a5 5 0 1 1 8 0M6 11a3 3 0 1 1 4 0M8 9v3" />
      </svg>
    ),
  },
  {
    name: 'Notes',
    running: true,
    icon: <svg viewBox="0 0 14 13" className="h-[13px] w-[14px]"><path d="M2 1h8v1h4v8h-2v2H4v-2H1z" fill="#dfe5e8" /><path d="M3 8l2-2 2 1 2-2 3 1" fill="none" stroke="#6aa5c0" /></svg>,
  },
  {
    name: 'OBS Studio',
    running: true,
    icon: (
      <svg viewBox="0 0 16 16" className="size-4">
        <circle cx="7.500" cy="7.500" r="7" fill="#171717" stroke="#d0d0d0" />
        <path d="M7 2.500c3 1 3 4 .500 5-3 0-5 1-4 4M7.500 7.500c2 2 5 1 5.500-2" fill="none" stroke="#d0d0d0" strokeWidth="1.300" />
        <circle cx="12" cy="12" r="4" fill="#e0121c" />
      </svg>
    ),
  },
]

const Taskbar: React.FC = () => (
  <nav aria-label="Taskbar" className="flex h-[27px] shrink-0 items-stretch justify-between bg-[#343230]">
    <div className="grid w-[457px] grid-cols-14">
      {apps.map(({ name, icon, running, active }) => (
        <button key={name} aria-label={name} className={`relative flex items-center justify-center ${active ? 'bg-[#5d5b59]' : ''}`}>
          {icon}
          {(running || active) && <span className={`absolute bottom-0 h-px bg-[#7fb2dc] ${active ? 'w-full' : 'w-[27px]'}`} />}
        </button>
      ))}
    </div>
    <div className="flex w-[42px] flex-col items-center justify-center whitespace-nowrap text-[8px] leading-3 text-white">
      <span>6:33 PM</span>
      <span>1/18/2026</span>
    </div>
  </nav>
)

export const App: React.FC = () => (
  <div className={`flex h-screen flex-col overflow-hidden bg-black ${UI_FONT}`}>
    <TabBar />
    <NavBar />
    <ChartHeader />
    <div className="flex min-h-0 flex-1">
      <LeftToolbar />
      <main className="relative flex min-w-0 flex-1 flex-col bg-[#05060a]">
        <Plot />
        <TimeAxis />
        <RangeBar />
        <button aria-label="Collapse toolbar" className="absolute bottom-[37px] left-[-6px] h-4 w-[6px] rounded-l-sm border border-r-0 border-[#3a3a3d] bg-black text-[6px] leading-[12px] text-[#9a9a9a]">
          ‹
        </button>
      </main>
      <aside className="flex w-[34px] shrink-0 justify-center border-l-[3px] border-r border-[#2c2d2f] bg-black pt-2 text-[#b8b8b8]">
        <button aria-label="Object tree" className="self-start"><Icon>{draw.layers}</Icon></button>
      </aside>
    </div>
    <TradeBar />
    <Taskbar />
  </div>
)

export default App
